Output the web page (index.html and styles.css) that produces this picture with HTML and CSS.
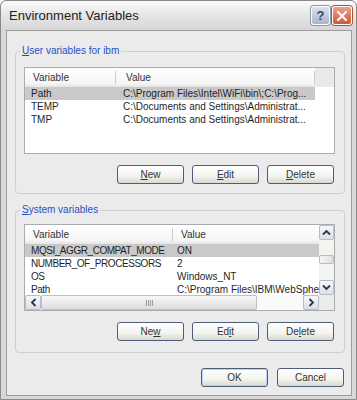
FILE: index.html
```html
<!DOCTYPE html>
<html lang="en">
<head>
    <meta charset="utf-8" />
    <title>Environment Variables</title>
    <link rel="stylesheet" href="styles.css">
</head>
<body>
  <div class="window">
      <div class="titlebar">
          <span class="title">Environment Variables</span>
          <div class="caption-btns">
              <span class="cap-btn help">?</span>
              <span class="cap-btn close">
                <svg width="12" height="12" viewBox="0 0 12 12"><path d="M2 2 L10 10 M10 2 L2 10" stroke="#fff" stroke-width="2.2" stroke-linecap="round"/></svg>
              </span>
          </div>
      </div>
      <div class="client">
          <fieldset class="group user-group">
              <legend><u>U</u>ser variables for ibm</legend>
              <div class="list">
                  <div class="list-head">
                      <div class="hcell ucol1">Variable</div>
                      <div class="hcell ucol2">Value</div>
                      <div class="hcell filler"></div>
                  </div>
                  <div class="row selected">
                      <div class="cell ucol1">Path</div>
                      <div class="cell ucol2">C:\Program Files\Intel\WiFi\bin\;C:\Prog...</div>
                  </div>
                  <div class="row">
                      <div class="cell ucol1">TEMP</div>
                      <div class="cell ucol2">C:\Documents and Settings\Administrat...</div>
                  </div>
                  <div class="row">
                      <div class="cell ucol1">TMP</div>
                      <div class="cell ucol2">C:\Documents and Settings\Administrat...</div>
                  </div>
              </div>
              <div class="btn-row">
                  <span class="btn"><u>N</u>ew</span>
                  <span class="btn"><u>E</u>dit</span>
                  <span class="btn"><u>D</u>elete</span>
              </div>
          </fieldset>

          <fieldset class="group sys-group">
              <legend><u>S</u>ystem variables</legend>
              <div class="list sys-list">
                  <div class="list-body">
                      <div class="list-head">
                          <div class="hcell scol1">Variable</div>
                          <div class="hcell scol2">Value</div>
                      </div>
                      <div class="row selected">
                          <div class="cell scol1">MQSI_AGGR_COMPAT_MODE</div>
                          <div class="cell scol2">ON</div>
                      </div>
                      <div class="row">
                          <div class="cell scol1">NUMBER_OF_PROCESSORS</div>
                          <div class="cell scol2">2</div>
                      </div>
                      <div class="row">
                          <div class="cell scol1">OS</div>
                          <div class="cell scol2">Windows_NT</div>
                      </div>
                      <div class="row">
                          <div class="cell scol1">Path</div>
                          <div class="cell scol2">C:\Program Files\IBM\WebSphe</div>
                      </div>
                  </div>
                  <div class="vscroll">
                      <span class="sb-btn">
                        <svg width="9" height="7" viewBox="0 0 9 7"><path d="M1 5.5 L4.5 2 L8 5.5" fill="none" stroke="#2a3550" stroke-width="1.8"/></svg>
                      </span>
                      <div class="vtrack">
                          <span class="vthumb"></span>
                      </div>
                      <span class="sb-btn">
                        <svg width="9" height="7" viewBox="0 0 9 7"><path d="M1 1.5 L4.5 5 L8 1.5" fill="none" stroke="#2a3550" stroke-width="1.8"/></svg>
                      </span>
                  </div>
                  <div class="hscroll">
                      <span class="sb-btn">
                        <svg width="7" height="9" viewBox="0 0 7 9"><path d="M5.5 1 L2 4.5 L5.5 8" fill="none" stroke="#2a3550" stroke-width="1.8"/></svg>
                      </span>
                      <div class="htrack">
                          <span class="hthumb"><span class="grip"></span></span>
                      </div>
                      <span class="sb-btn">
                        <svg width="7" height="9" viewBox="0 0 7 9"><path d="M1.5 1 L5 4.5 L1.5 8" fill="none" stroke="#2a3550" stroke-width="1.8"/></svg>
                      </span>
                  </div>
                  <div class="corner"></div>
              </div>
              <div class="btn-row">
                  <span class="btn">Ne<u>w</u></span>
                  <span class="btn">Ed<u>i</u>t</span>
                  <span class="btn">De<u>l</u>ete</span>
              </div>
          </fieldset>

          <div class="dialog-btns">
              <span class="btn default">OK</span>
              <span class="btn">Cancel</span>
          </div>
      </div>
  </div>
</body>
</html>
```

FILE: styles.css
```css
body{
    margin: 0;
    background: #fff;
    font-family: "Liberation Sans", Arial, sans-serif;
    font-size: 10px;
    color: #1f1f1f;
}

.window{
    width: 357px;
    height: 400px;
    box-sizing: border-box;
    border: 1px solid #8a8a8a;
    border-radius: 6px 6px 0 0;
    background: #d9d9d9;
    display: flex;
    flex-direction: column;
}

.titlebar{
    height: 29px;
    flex: none;
    display: flex;
    align-items: center;
    padding: 0 4px 0 8px;
    border-radius: 6px 6px 0 0;
    background: linear-gradient(#fbfbfb, #e9e9e9 40%, #d6d6d6);
}

.title{
    flex: 1;
    font-size: 13px;
    color: #222;
}

.caption-btns{
    display: flex;
    gap: 2px;
}

.cap-btn{
    width: 19px;
    height: 19px;
    box-sizing: border-box;
    border: 1px solid #fff;
    border-radius: 3px;
    display: flex;
    align-items: center;
    justify-content: center;
}

.help{
    background: linear-gradient(#dde2ee, #a9b3cc);
    color: #3a4767;
    font-weight: bold;
    font-size: 13px;
    box-shadow: 0 0 0 1px #8d95a8;
}

.close{
    width: 20px;
    background: linear-gradient(#f0a08a, #d0553a);
    box-shadow: 0 0 0 1px #a4563f;
}

.client{
    flex: 1;
    margin: 0 4px 3px 5px;
    border: 1px solid #9c9c9c;
    background: #ebebeb;
    padding: 14px 6px 0 8px;
    display: flex;
    flex-direction: column;
}

.group{
    margin: 0;
    border: 1px solid #cfcfcf;
    border-radius: 4px;
    padding: 10px 9px 9px 8px;
}

.sys-group{
    margin-top: 10px;
    padding-top: 8px;
    padding-bottom: 11px;
}

legend{
    color: #1d4fc4;
    line-height: 12px;
    padding: 0 2px;
    margin-left: -4px;
}

.list{
    height: 87px;
    box-sizing: border-box;
    background: #fff;
    border: 1px solid #a9adb3;
    overflow: hidden;
}

.list-head{
    display: flex;
    height: 19px;
    align-items: center;
    color: #333;
    background: linear-gradient(#ffffff, #f6f6f6 80%, #e4e4e4);
}

.hcell{
    height: 100%;
    box-sizing: border-box;
    display: flex;
    align-items: center;
    background: linear-gradient(#cbcbcb, #cbcbcb) right 3px / 1px 13px no-repeat;
}

.filler{
    flex: 1;
    background: #e9e9e9;
}

.row{
    display: flex;
    height: 13px;
    line-height: 13px;
}

.row.selected .cell{
    background: #c9c9c9;
}

.cell{
    white-space: nowrap;
    overflow: hidden;
    box-sizing: border-box;
}

.ucol1{
    width: 91px;
}

.ucol2{
    width: 199px;
}

.hcell.ucol1{
    padding-left: 8px;
}

.hcell.ucol2{
    padding-left: 10px;
}

.cell.ucol1{
    padding-left: 6px;
}

.cell.ucol2{
    padding-left: 7px;
}

.sys-list{
    display: grid;
    grid-template-columns: 1fr 15px;
    grid-template-rows: 1fr 15px;
}

.list-body{
    overflow: hidden;
}

.scol1{
    width: 148px;
}

.scol2{
    flex: 1;
}

.hcell.scol1{
    padding-left: 8px;
}

.hcell.scol2{
    padding-left: 8px;
    background: none;
}

.cell.scol1{
    padding-left: 6px;
    letter-spacing: -0.45px;
}

.cell.scol2{
    padding-left: 4px;
}

.vscroll{
    display: flex;
    flex-direction: column;
    background: #f3f3ef;
}

.hscroll{
    display: flex;
    background: #f3f3ef;
}

.corner{
    background: #ebebeb;
}

.sb-btn{
    flex: none;
    width: 15px;
    height: 15px;
    box-sizing: border-box;
    border: 1px solid #b6bcc8;
    border-radius: 2px;
    background: linear-gradient(#f7f8fa, #dcdfe6);
    display: flex;
    align-items: center;
    justify-content: center;
}

.hscroll .sb-btn{
    width: 16px;
}

.vtrack{
    flex: 1;
    padding-top: 15px;
}

.vthumb{
    display: block;
    height: 7px;
    border: 1px solid #b6bcc8;
    border-radius: 2px;
    background: linear-gradient(90deg, #f6f6f6, #dedede);
}

.htrack{
    flex: 1;
    background: #fafafa;
}

.hthumb{
    display: flex;
    align-items: center;
    justify-content: center;
    width: 216px;
    height: 100%;
    box-sizing: border-box;
    border: 1px solid #bcc0c8;
    border-radius: 2px;
    background: linear-gradient(#f8f8f8, #dcdcdc);
}

.grip{
    width: 7px;
    height: 6px;
    background: repeating-linear-gradient(90deg, #9a9a9a 0 1px, transparent 1px 2px);
}

.btn-row{
    display: flex;
    justify-content: flex-end;
    gap: 8px;
    margin: 11px 1px 0 0;
}

.btn{
    width: 67px;
    height: 19px;
    box-sizing: border-box;
    border: 1px solid #4e5e78;
    border-radius: 3px;
    background: linear-gradient(#ffffff, #f3f3ef 60%, #d9d8d2);
    display: flex;
    align-items: center;
    justify-content: center;
    color: #333;
}

.btn.default{
    box-shadow: inset 0 0 0 1px #bcd1f2;
}

.dialog-btns{
    display: flex;
    justify-content: flex-end;
    gap: 9px;
    margin: 15px 1px 0 0;
}
```
